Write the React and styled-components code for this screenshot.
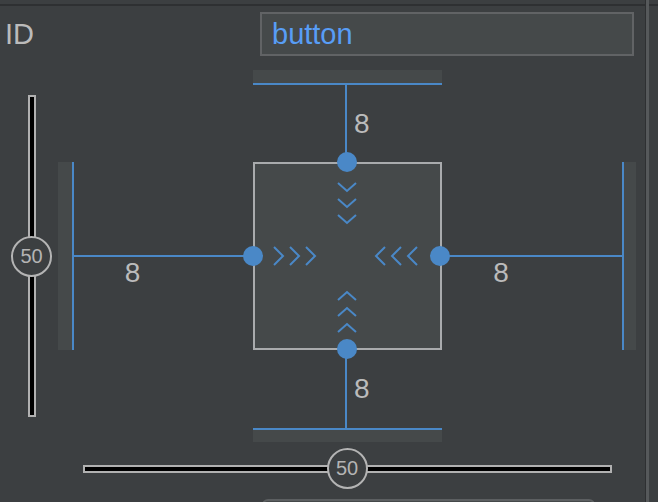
import React from 'react';
import styled, { createGlobalStyle } from 'styled-components';

const BLUE = '#4a88c7';
const BG = '#3c3f41';
const FILL = '#45494a';

const GlobalStyle = createGlobalStyle`
  *, *::before, *::after { box-sizing: border-box; }
  html, body { margin: 0; padding: 0; background: ${BG}; }
  body { font-family: "Liberation Sans", Arial, sans-serif; overflow: hidden; }
`;

const Page = styled.div`
  display: flex;
  width: 658px;
  height: 502px;
  overflow: hidden;
  background: ${BG};
`;

const Pane = styled.div`
  flex: 0 0 645px;
  display: flex;
  flex-direction: column;
`;

const SidePane = styled.div`
  flex: 1;
  display: flex;
  flex-direction: column;
`;

const Rule = styled.div`
  flex-shrink: 0;
  height: 2px;
  margin-top: 4px;
  background: #2e3032;
`;

const Divider = styled.div`
  flex: 0 0 4px;
  border-left: 1px solid #2e3032;
  background: #56595b;
`;

const Header = styled.div`
  display: flex;
  align-items: center;
  justify-content: space-between;
  margin-top: 6px;
  padding: 0 11px 0 5px;
`;

const Label = styled.span`
  font-size: 29px;
  color: #bbbbbb;
`;

const Field = styled.input`
  width: 374px;
  height: 44px;
  border: 2px solid #616365;
  background: ${FILL};
  padding: 0 0 0 10px;
  font: inherit;
  font-size: 29px;
  color: #589df6;
  outline: none;
`;

const Editor = styled.div`
  display: grid;
  grid-template-columns: 58px 16px 179px 189px 180px 14px;
  grid-template-rows: 15px 77px 188px 78px 14px auto;
  margin-top: 14px;
`;

const Anchor = styled.div`
  grid-row: ${p => p.$row};
  grid-column: ${p => p.$col};
  background: ${FILL};
  border-${p => p.$edge}: 2px solid ${BLUE};
`;

const VLink = styled.div`
  grid-row: ${p => p.$row};
  grid-column: 4;
  display: grid;
  grid-template-columns: 1fr 2px 1fr;
  align-items: center;
  padding-right: 3px;
`;

const HLink = styled.div`
  grid-row: 3;
  grid-column: ${p => p.$col};
  display: grid;
  grid-template-rows: 1fr 2px 1fr;
`;

const Wire = styled.div`
  background: ${BLUE};
  grid-row: ${p => (p.$horizontal ? 2 : 1)};
  grid-column: ${p => (p.$horizontal ? 1 : 2)};
  align-self: stretch;
`;

const Margin = styled.span`
  font-size: 28px;
  color: #bbbbbb;
  ${p =>
    p.$horizontal
      ? 'grid-row: 3; align-self: start; justify-self: center; margin-right: 62px;'
      : 'grid-row: 1; grid-column: 3; justify-self: start; margin-left: 7px;'}
`;

const Box = styled.div`
  grid-row: 3;
  grid-column: 4;
  position: relative;
  border: 2px solid #a9abad;
  background: ${FILL};
  display: grid;
  grid-template-columns: 1fr auto 1fr;
  grid-template-rows: 1fr auto 1fr;
`;

const dotPlace = {
  top: 'top: -12px; left: calc(50% - 11px);',
  bottom: 'bottom: -11px; left: calc(50% - 11px);',
  left: 'left: -12px; top: calc(50% - 10px);',
  right: 'right: -10px; top: calc(50% - 10px);',
};

const Dot = styled.span`
  position: absolute;
  width: 20px;
  height: 20px;
  border-radius: 50%;
  background: ${BLUE};
  ${p => dotPlace[p.$side]}
`;

const groupPlace = {
  down: 'grid-row: 1; grid-column: 2; align-self: start; margin-top: 18px; margin-right: 2px;',
  up: 'grid-row: 3; grid-column: 2; align-self: end; margin-bottom: 15px; margin-right: 2px;',
  right: 'grid-row: 2; grid-column: 1; justify-self: start; margin-left: 18px;',
  left: 'grid-row: 2; grid-column: 3; justify-self: end; margin-right: 22px;',
};

const ChevronSvg = styled.svg`
  display: block;
  overflow: visible;
  ${p => groupPlace[p.$dir]}
`;

const chevronPoints = (dir, i) => {
  const o = i * 16;
  switch (dir) {
    case 'down':
      return `1,${1 + o} 10,${9 + o} 19,${1 + o}`;
    case 'up':
      return `1,${9 + o} 10,${1 + o} 19,${9 + o}`;
    case 'right':
      return `${1 + o},1 ${10 + o},10 ${1 + o},19`;
    default:
      return `${10 + o},1 ${1 + o},10 ${10 + o},19`;
  }
};

const Chevrons = ({ dir }) => {
  const vertical = dir === 'down' || dir === 'up';
  return (
    <ChevronSvg
      $dir={dir}
      width={vertical ? 20 : 43}
      height={vertical ? 42 : 20}
      viewBox={vertical ? '0 0 20 42' : '0 0 43 20'}
    >
      {[0, 1, 2].map(i => (
        <polyline
          key={i}
          points={chevronPoints(dir, i)}
          fill="none"
          stroke={BLUE}
          strokeWidth="2"
        />
      ))}
    </ChevronSvg>
  );
};

const SliderWrap = styled.div`
  display: grid;
  place-items: center;
  ${p =>
    p.$vertical
      ? 'grid-row: 1 / 6; grid-column: 1; justify-self: start; margin-left: 11px; width: 41px;'
      : 'grid-row: 6; grid-column: 2 / 7; margin-top: 6px;'}
`;

const Track = styled.div`
  grid-area: 1 / 1;
  background: #000;
  border: 2px solid #b1b1b1;
  width: ${p => (p.$vertical ? '8px' : '529px')};
  height: ${p => (p.$vertical ? '322px' : '8px')};
`;

const Knob = styled.div`
  grid-area: 1 / 1;
  width: 41px;
  height: 41px;
  border-radius: 50%;
  border: 2px solid #b4b4b4;
  background: ${BG};
  display: flex;
  align-items: center;
  justify-content: center;
  font-size: 20px;
  color: #b4b4b4;
`;

const Slider = ({ vertical, value }) => (
  <SliderWrap $vertical={vertical}>
    <Track $vertical={vertical} />
    <Knob>{value}</Knob>
  </SliderWrap>
);

const NextRow = styled.div`
  flex-shrink: 0;
  margin: 10px 0 0 262px;
  width: 333px;
  height: 30px;
  border: 2px solid #5c5f61;
  border-radius: 6px;
  background: ${FILL};
`;

const App = () => (
  <>
    <GlobalStyle />
    <Page>
      <Pane>
        <Rule />
        <Header>
          <Label>ID</Label>
          <Field value="button" readOnly />
        </Header>
        <Editor>
          <Slider vertical value="50" />

          <Anchor $row={1} $col={4} $edge="bottom" />
          <VLink $row={2}>
            <Wire />
            <Margin>8</Margin>
          </VLink>

          <Anchor $row={3} $col={2} $edge="right" />
          <HLink $col={3}>
            <Wire $horizontal />
            <Margin $horizontal>8</Margin>
          </HLink>

          <Box>
            <Chevrons dir="down" />
            <Chevrons dir="right" />
            <Chevrons dir="left" />
            <Chevrons dir="up" />
            <Dot $side="top" />
            <Dot $side="left" />
            <Dot $side="right" />
            <Dot $side="bottom" />
          </Box>

          <HLink $col={5}>
            <Wire $horizontal />
            <Margin $horizontal>8</Margin>
          </HLink>
          <Anchor $row={3} $col={6} $edge="left" />

          <VLink $row={4}>
            <Wire />
            <Margin>8</Margin>
          </VLink>
          <Anchor $row={5} $col={4} $edge="top" />

          <Slider value="50" />
        </Editor>
        <NextRow />
      </Pane>
      <Divider />
      <SidePane>
        <Rule />
      </SidePane>
    </Page>
  </>
);

export default App;
